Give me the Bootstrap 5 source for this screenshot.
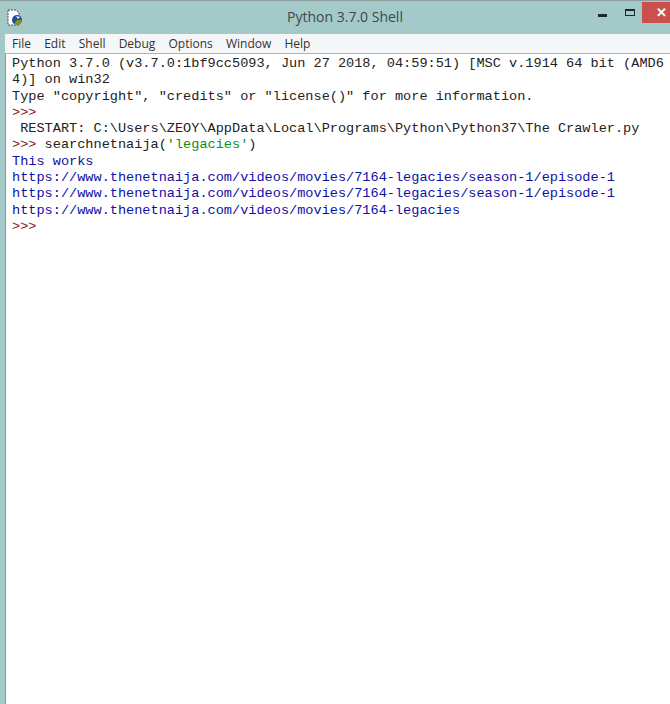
<!doctype html>
<html lang="en"><head><meta charset="utf-8"><title>Python 3.7.0 Shell</title>
<link href="https://cdn.jsdelivr.net/npm/bootstrap@5.3.0/dist/css/bootstrap.min.css" rel="stylesheet">
<style>
html,body{height:100%;margin:0}
body{background:#fff;overflow:hidden}
.win-frame{width:670px;height:704px;background:#a3c9c9;border-top:1px solid #8f9f9f}
.title-row{height:32px;position:relative;padding-left:20px}
.title-text{font:14px "Open Sans","Liberation Sans",sans-serif;color:#3c4a4a;line-height:31px}
.app-ico{left:7px;top:8px;position:absolute}
.ctl{position:absolute;top:0}
.ctl-close{left:642px;top:1px;width:28px;height:21px;background:#c9504f;color:#fff;font:bold 13px/21px "Liberation Sans",sans-serif;padding-left:11px}
.ctl-min{left:598px;top:13px;width:9px;height:3px;background:#1d2a2a}
.ctl-max{left:625px;top:8px;width:10px;height:7px;border:1px solid #1d2a2a;border-top-width:2px}
.menu-row{height:20px;margin-top:1px;margin-left:5px;background:#f5f6f7;border-bottom:1px solid #a9b4b4;gap:13.2px;padding-left:7px;font:12px/19px "Open Sans","Liberation Sans",sans-serif;color:#333}
.shell-area{margin-left:5px;height:650px;background:#fff;padding:2px 0 0 6px;border-left:1px solid #7f9c9c;font:13.58px/16.3px "Liberation Mono","Courier New",monospace;color:#222;white-space:pre;overflow:hidden}
.prompt{color:#8b1a2b}.out{color:#0f0fa8}.str{color:#168c16}
</style></head><body>
<div class="win-frame">
<div class="title-row text-center">
<svg class="app-ico" width="17" height="17" viewBox="0 0 17 17"><path d="M1 1h8l3 3v12H1z" fill="#fff" stroke="#445" stroke-dasharray="2 1"/><circle cx="10" cy="11" r="5" fill="#1f4f9f"/><path d="M10 11h5a5 5 0 0 1-8 4z" fill="#8f8f2a"/><path d="M9 7l4 1-2 2z" fill="#fff"/></svg>
<span class="title-text">Python 3.7.0 Shell</span>
<div class="ctl ctl-min"></div><div class="ctl ctl-max"></div><div class="ctl ctl-close">✕</div>
</div>
<div class="menu-row d-flex"><span>File</span><span>Edit</span><span>Shell</span><span>Debug</span><span>Options</span><span>Window</span><span>Help</span></div>
<div class="shell-area">Python 3.7.0 (v3.7.0:1bf9cc5093, Jun 27 2018, 04:59:51) [MSC v.1914 64 bit (AMD6
4)] on win32
Type "copyright", "credits" or "license()" for more information.
<span class="prompt">&gt;&gt;&gt;</span>
 RESTART: C:\Users\ZEOY\AppData\Local\Programs\Python\Python37\The Crawler.py
<span class="prompt">&gt;&gt;&gt;</span> searchnetnaija(<span class="str">'legacies'</span>)
<span class="out">This works
https://www.thenetnaija.com/videos/movies/7164-legacies/season-1/episode-1
https://www.thenetnaija.com/videos/movies/7164-legacies/season-1/episode-1
https://www.thenetnaija.com/videos/movies/7164-legacies</span>
<span class="prompt">&gt;&gt;&gt;</span></div>
</div>
<script src="https://cdn.jsdelivr.net/npm/bootstrap@5.3.0/dist/js/bootstrap.bundle.min.js"></script>
</body></html>
